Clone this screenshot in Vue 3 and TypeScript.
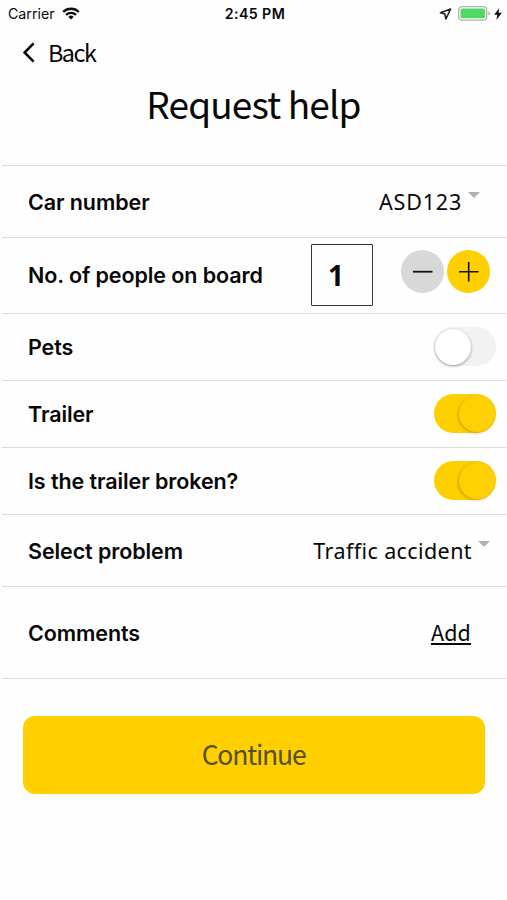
<script setup lang="ts">
import { computed, reactive, ref } from 'vue'

type ToggleKey = 'pets' | 'trailer' | 'broken'

const people = ref(1)
const toggles = reactive<Record<ToggleKey, boolean>>({ pets: false, trailer: true, broken: true })
const toggleRows: { key: ToggleKey; label: string }[] = [
  { key: 'pets', label: 'Pets' },
  { key: 'trailer', label: 'Trailer' },
  { key: 'broken', label: 'Is the trailer broken?' },
]
const visibleRows = computed(() => toggleRows.filter((r) => r.key !== 'broken' || toggles.trailer))

function change(step: number) {
  people.value = Math.max(1, people.value + step)
}
</script>

<template>
  <main class="screen">
    <header class="status">
      <div class="carrier">
        <span>Carrier</span>
        <svg width="18" height="13" viewBox="0 0 18 13" fill="none" stroke="#111" stroke-width="2.3">
          <path d="M1.2 4.9a11.2 11.2 0 0 1 15.6 0" />
          <path d="M4 7.9a7.2 7.2 0 0 1 10 0" />
          <path d="M9 12.6 6.3 9.9a3.8 3.8 0 0 1 5.4 0z" fill="#111" stroke="none" />
        </svg>
      </div>
      <span class="time">2:45 PM</span>
      <div class="indicators">
        <svg width="13" height="12" viewBox="0 0 13 12" fill="none" stroke="#222" stroke-width="1.6" stroke-linejoin="round">
          <path d="M11.6 1 1.4 4.7l4.5 1.4 1 4.9z" />
        </svg>
        <svg class="battery" width="33" height="15" viewBox="0 0 33 15">
          <rect x=".7" y=".7" width="28" height="13.4" rx="3.4" fill="#fff" stroke="#b0b0b0" stroke-width="1.3" />
          <rect x="2.5" y="2.5" width="24.4" height="9.8" rx="1.6" fill="#4cd964" />
          <path d="M30.4 5.2q1.6.6 1.6 2.2t-1.6 2.2z" fill="#aaa" />
        </svg>
        <svg width="8" height="12" viewBox="0 0 8 12"><path d="M5.2 0 .2 6.8h3L2.5 12l5.3-7.2H4.5z" fill="#111" /></svg>
      </div>
    </header>

    <button class="back" type="button">
      <svg width="13" height="21" viewBox="0 0 13 21" fill="none" stroke="#000" stroke-width="2.5">
        <path d="M11.6 1.4 2.6 10.5l9 9.1" />
      </svg>
      <span>Back</span>
    </button>

    <h1 class="title">Request help</h1>

    <section class="form">
      <div class="row select-row">
        <span class="label">Car number</span>
        <button class="select car" type="button">
          <span>ASD123</span>
          <svg width="12" height="6" viewBox="0 0 12 6"><path d="M0 0h12L6 6z" fill="#b0b0b0" /></svg>
        </button>
      </div>

      <div class="row people-row">
        <span class="label">No. of people on board</span>
        <div class="stepper">
          <output class="count">{{ people }}</output>
          <button class="round minus" type="button" @click="change(-1)">
            <svg width="43" height="43" viewBox="0 0 43 43"><path d="M12 21.7h19.5" stroke="#111" stroke-width="1.8" /></svg>
          </button>
          <button class="round plus" type="button" @click="change(1)">
            <svg width="43" height="43" viewBox="0 0 43 43"><path d="M12 21.7h19.5M21.7 12v19.5" stroke="#111" stroke-width="1.6" /></svg>
          </button>
        </div>
      </div>

      <div v-for="row in visibleRows" :key="row.key" class="row toggle-row">
        <span class="label">{{ row.label }}</span>
        <button
          class="switch"
          :class="{ on: toggles[row.key] }"
          type="button"
          role="switch"
          :aria-checked="toggles[row.key]"
          @click="toggles[row.key] = !toggles[row.key]"
        >
          <span class="thumb"></span>
        </button>
      </div>

      <div class="row select-row">
        <span class="label">Select problem</span>
        <button class="select problem" type="button">
          <span>Traffic accident</span>
          <svg width="12" height="6" viewBox="0 0 12 6"><path d="M0 0h12L6 6z" fill="#b0b0b0" /></svg>
        </button>
      </div>

      <div class="row comments-row">
        <span class="label">Comments</span>
        <button class="add" type="button">Add</button>
      </div>
    </section>

    <button class="continue" type="button">Continue</button>
  </main>
</template>

<style>
body {
  margin: 0;
  background: #fefefe;
}
</style>

<style scoped>
.screen {
  box-sizing: border-box;
  width: 507px;
  height: 900px;
  overflow: hidden;
  display: flex;
  flex-direction: column;
  color: #080808;
  font-family: 'Noto Sans CJK SC', 'Noto Sans', sans-serif;
}
button {
  padding: 0;
  border: 0;
  background: none;
  color: inherit;
  font: inherit;
}
svg {
  display: block;
  flex: none;
}
.status {
  display: grid;
  grid-template-columns: 1fr auto 1fr;
  align-items: center;
  height: 27px;
  padding: 0 5px 0 8px;
  font: 400 14.2px/27px Inter, sans-serif;
}
.carrier {
  display: flex;
  align-items: center;
  gap: 7px;
}
.time {
  font-weight: 600;
  letter-spacing: 0.4px;
}
.indicators {
  display: flex;
  align-items: center;
  justify-content: flex-end;
  gap: 6px;
}
.battery {
  margin-right: -3px;
}
.back {
  display: flex;
  align-items: center;
  align-self: flex-start;
  gap: 13px;
  height: 50px;
  margin-left: 22px;
  font-size: 23.4px;
  line-height: 50px;
  letter-spacing: -1.5px;
}
.title {
  height: 89px;
  margin: -1px 0 0;
  text-align: center;
  font-size: 37px;
  font-weight: 400;
  line-height: 55px;
  letter-spacing: -0.85px;
}
.form {
  margin: 0 1px 0 2px;
  border-top: 1px solid #dcdcdc;
}
.row {
  box-sizing: border-box;
  display: flex;
  align-items: center;
  justify-content: space-between;
  padding-left: 26px;
  border-bottom: 1px solid #dcdcdc;
}
.label {
  font: 600 21.5px/30px Inter, sans-serif;
  letter-spacing: -0.09px;
}
.select-row {
  height: 72px;
}
.people-row {
  height: 76px;
  padding-bottom: 2px;
}
.toggle-row {
  height: 67px;
  padding-right: 10px;
  padding-bottom: 1px;
}
.comments-row {
  height: 92px;
  padding-right: 35px;
}
.select {
  display: flex;
  align-items: flex-start;
  gap: 6px;
  font-family: 'Noto Sans', sans-serif;
  font-size: 21.5px;
  line-height: 30px;
  letter-spacing: 0.8px;
}
.select svg {
  margin-top: 5px;
}
.car {
  margin-right: 26px;
}
.problem {
  margin-right: 16px;
  letter-spacing: 0.4px;
}
.stepper {
  display: flex;
  align-items: flex-start;
  height: 62px;
  margin-right: 16px;
}
.count {
  box-sizing: border-box;
  width: 62px;
  height: 62px;
  margin-right: 28px;
  padding-right: 11px;
  border: 1.5px solid #333;
  border-radius: 1px;
  text-align: center;
  font-family: 'Noto Sans', sans-serif;
  font-size: 28px;
  font-weight: 700;
  line-height: 60px;
}
.round {
  width: 43px;
  height: 43px;
  margin-top: 6px;
  border-radius: 50%;
}
.minus {
  margin-right: 3.5px;
  background: #d8d8d8;
}
.plus {
  background: #ffcf00;
}
.switch {
  box-sizing: border-box;
  display: flex;
  align-items: center;
  width: 62px;
  height: 39px;
  padding: 0 1px;
  border-radius: 20px;
  background: #f2f2f2;
}
.thumb {
  width: 36px;
  height: 36px;
  border-radius: 50%;
  background: #fff;
  box-shadow: 0 1px 3px rgba(0, 0, 0, 0.4);
}
.switch.on {
  justify-content: flex-end;
  background: #ffcf00;
}
.on .thumb {
  background: #ffd105;
  box-shadow: -1px 1px 3px rgba(120, 90, 0, 0.4);
}
.add {
  margin-bottom: 2px;
  font-size: 21.5px;
  line-height: 30px;
  letter-spacing: 0.1px;
  text-decoration: underline;
  text-decoration-thickness: 1.5px;
  text-underline-offset: 2px;
}
.continue {
  height: 78px;
  margin: 37px 22px 0 23px;
  padding: 0 1px 2px 0;
  border-radius: 12px;
  background: #ffcf00;
  color: #55502a;
  font-size: 26.5px;
  line-height: 76px;
  letter-spacing: -1.2px;
}
</style>
